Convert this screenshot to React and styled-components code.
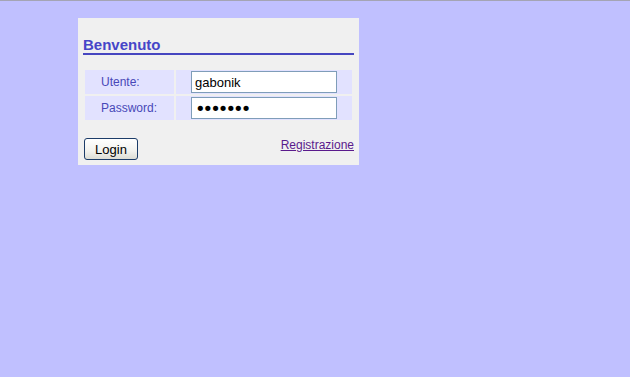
import React from "react";
import styled, { createGlobalStyle } from "styled-components";

const Global = createGlobalStyle`
  html, body { margin: 0; padding: 0; }
  body {
    background: #c0c0ff;
    border-top: 1px solid #a4a4b4;
    min-height: 376px;
    font-family: "Liberation Sans", Arial, sans-serif;
  }
`;

const Panel = styled.div`
  margin: 17px 0 0 78px;
  width: 271px;
  padding: 18px 5px 5px 5px;
  background: #f0f0f0;
`;

const Heading = styled.h2`
  margin: 0;
  font-size: 15px;
  line-height: 17px;
  font-weight: bold;
  color: #4646c8;
  border-bottom: 2px solid #4646c0;
`;

const Form = styled.div`
  display: grid;
  grid-template-columns: 89px 176px;
  grid-auto-rows: 24px;
  gap: 2px;
  padding: 0 2px;
  margin-top: 15px;
`;

const LabelCell = styled.div`
  background: #e2e2ff;
  display: flex;
  align-items: center;
  padding-left: 16px;
  font-size: 12px;
  color: #4848b8;
`;

const InputCell = styled.div`
  background: #e2e2ff;
  display: flex;
  align-items: center;
  padding-left: 15px;
`;

const Field = styled.input`
  box-sizing: border-box;
  width: 146px;
  height: 22px;
  border: 1px solid #7f9db9;
  background: #fff;
  padding: 0 3px;
  font-family: ${(p) =>
    p.$masked ? '"DejaVu Sans", sans-serif' : '"Liberation Sans", Arial, sans-serif'};
  font-size: ${(p) => (p.$masked ? "18px" : "13px")};
  letter-spacing: ${(p) => (p.$masked ? "-3px" : "normal")};
  line-height: 20px;
  color: #000;
  outline: none;
`;

const Footer = styled.div`
  display: flex;
  justify-content: space-between;
  align-items: center;
  margin-top: 18px;
  padding-left: 1px;
`;

const Button = styled.button`
  box-sizing: border-box;
  width: 54px;
  height: 22px;
  border: 1px solid #1c3c68;
  border-radius: 3px;
  background: linear-gradient(#ffffff, #f2f2ee 60%, #dcdcd4);
  font-family: "Liberation Sans", Arial, sans-serif;
  font-size: 13px;
  color: #000;
  padding: 0;
`;

const Link = styled.a`
  font-size: 12px;
  color: #5a1a8c;
  text-decoration: underline;
  margin-top: -8px;
`;

export default function App() {
  return (
    <>
      <Global />
      <Panel>
        <Heading>Benvenuto</Heading>
        <Form>
          <LabelCell>Utente:</LabelCell>
          <InputCell>
            <Field type="text" defaultValue="gabonik" />
          </InputCell>
          <LabelCell>Password:</LabelCell>
          <InputCell>
            <Field $masked type="password" defaultValue="1234567" />
          </InputCell>
        </Form>
        <Footer>
          <Button>Login</Button>
          <Link href="#">Registrazione</Link>
        </Footer>
      </Panel>
    </>
  );
}
